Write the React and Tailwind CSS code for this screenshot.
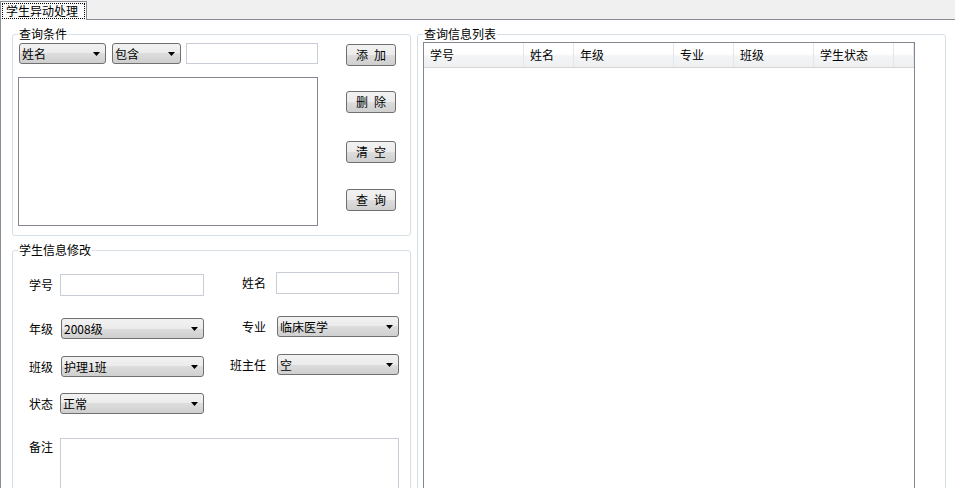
import React from "react";

const comboBg =
  "border border-[#707070] rounded-[3px] bg-[linear-gradient(#f2f2f2,#ebebeb_50%,#dddddd_50%,#cfcfcf)]";

function Arrow() {
  return (
    <svg width="7" height="4" viewBox="0 0 7 4" className="shrink-0">
      <path d="M0 0H7L3.5 4Z" fill="#000" />
    </svg>
  );
}

function Combo({ text, className = "" }) {
  return (
    <div className={`flex items-center h-[21px] pl-[2px] pr-[5px] ${comboBg} ${className}`}>
      <span className="flex-1 whitespace-nowrap">{text}</span>
      <Arrow />
    </div>
  );
}

function Btn({ a, b, className = "" }) {
  return (
    <div className={`flex items-center justify-center gap-[6px] w-[50px] h-[22px] ${comboBg} ${className}`}>
      <span>{a}</span>
      <span>{b}</span>
    </div>
  );
}

function TextBox({ className = "" }) {
  return <div className={`bg-white border border-[#c9ced6] ${className}`} />;
}

function Group({ title, className = "", children }) {
  return (
    <fieldset className={`border border-[#d5dfe5] rounded-[3px] p-0 m-0 min-w-0 ${className}`}>
      <legend className="ml-[5px] px-[1px] leading-[14px] p-0">{title}</legend>
      {children}
    </fieldset>
  );
}

const headers = [
  ["学号", "w-[100px]"],
  ["姓名", "w-[50px]"],
  ["年级", "w-[100px]"],
  ["专业", "w-[60px]"],
  ["班级", "w-[80px]"],
  ["学生状态", "w-[80px]"],
];

export default function App() {
  return (
    <div className="w-[955px] h-[488px] overflow-hidden bg-white text-black text-[12px] leading-[14px] font-['Noto_Sans_CJK_SC','Noto_Sans',sans-serif]">
      {/* tab strip */}
      <div className="flex h-[20px] bg-[#f0f0f0]">
        <div className="mt-[1px] h-[19px] w-[87px] border border-b-0 border-[#898c95] bg-[#fbfbfb] pl-[1px] pt-[1px]">
          <div className="h-[16px] w-[83px] border border-dotted border-black flex items-center pl-[3px]">
            学生异动处理
          </div>
        </div>
        <div className="flex-1 border-b border-[#898c95]" />
      </div>

      {/* content */}
      <div className="flex h-[468px] border-l border-[#898c95] pl-[11px]">
        {/* left column */}
        <div className="w-[399px] flex flex-col">
          <Group title="查询条件" className="mt-[7px]">
            <div className="flex pl-[5px]">
              <div className="w-[300px] flex flex-col">
                <div className="flex mt-[2px] ml-[1px]">
                  <Combo text="姓名" className="w-[87px]" />
                  <Combo text="包含" className="w-[69px] ml-[6px]" />
                  <TextBox className="w-[132px] h-[21px] ml-[5px]" />
                </div>
                <div className="mt-[13px] mb-[9px] h-[149px] border border-[#828790] bg-white" />
              </div>
              <div className="ml-[28px] flex flex-col">
                <Btn a="添" b="加" className="mt-[3px]" />
                <Btn a="删" b="除" className="mt-[25px]" />
                <Btn a="清" b="空" className="mt-[28px]" />
                <Btn a="查" b="询" className="mt-[26px]" />
              </div>
            </div>
          </Group>

          <Group title="学生信息修改" className="mt-[7px] h-[300px]">
            {/* row 1 */}
            <div className="flex items-start mt-[15px]">
              <div className="flex items-center mt-[2px]">
                <span className="w-[47px] text-right pr-[7px]">学号</span>
                <TextBox className="w-[144px] h-[22px]" />
              </div>
              <div className="flex items-center">
                <span className="w-[72px] text-right pr-[10px]">姓名</span>
                <TextBox className="w-[123px] h-[22px]" />
              </div>
            </div>
            {/* row 2 */}
            <div className="flex items-start mt-[20px]">
              <div className="flex items-center mt-[2px]">
                <span className="w-[47px] text-right pr-[7px]">年级</span>
                <Combo text="2008级" className="w-[143px] ml-[1px]" />
              </div>
              <div className="flex items-center">
                <span className="w-[73px] text-right pr-[11px]">专业</span>
                <Combo text="临床医学" className="w-[122px]" />
              </div>
            </div>
            {/* row 3 */}
            <div className="flex items-start mt-[15px]">
              <div className="flex items-center mt-[2px]">
                <span className="w-[47px] text-right pr-[7px]">班级</span>
                <Combo text="护理1班" className="w-[143px] ml-[1px]" />
              </div>
              <div className="flex items-center">
                <span className="w-[73px] text-right pr-[11px]">班主任</span>
                <Combo text="空" className="w-[122px]" />
              </div>
            </div>
            {/* row 4 */}
            <div className="flex items-start mt-[16px]">
              <div className="flex items-center">
                <span className="w-[47px] text-right pr-[7px]">状态</span>
                <Combo text="正常" className="w-[144px]" />
              </div>
            </div>
            {/* row 5 */}
            <div className="flex items-start mt-[24px]">
              <span className="w-[47px] text-right pr-[7px] pt-[2px]">备注</span>
              <TextBox className="w-[339px] h-[80px]" />
            </div>
          </Group>
        </div>

        {/* right column */}
        <div className="ml-[6px] w-[529px]">
          <Group title="查询信息列表" className="mt-[7px] h-[480px]">
            <div className="ml-[5px] mt-[1px] w-[492px] h-[470px] border border-[#828790] bg-white">
              <div className="flex h-[25px] border-b border-[#d5d5d5] bg-[linear-gradient(#ffffff,#ffffff_45%,#f3f4f6_55%,#eef0f2)]">
                {headers.map(([t, w]) => (
                  <div key={t} className={`${w} flex items-center pl-[6px] border-r border-[#e3e6ea]`}>
                    {t}
                  </div>
                ))}
                <div className="w-[20px] border-r border-[#e3e6ea]" />
              </div>
            </div>
          </Group>
        </div>
      </div>
    </div>
  );
}
